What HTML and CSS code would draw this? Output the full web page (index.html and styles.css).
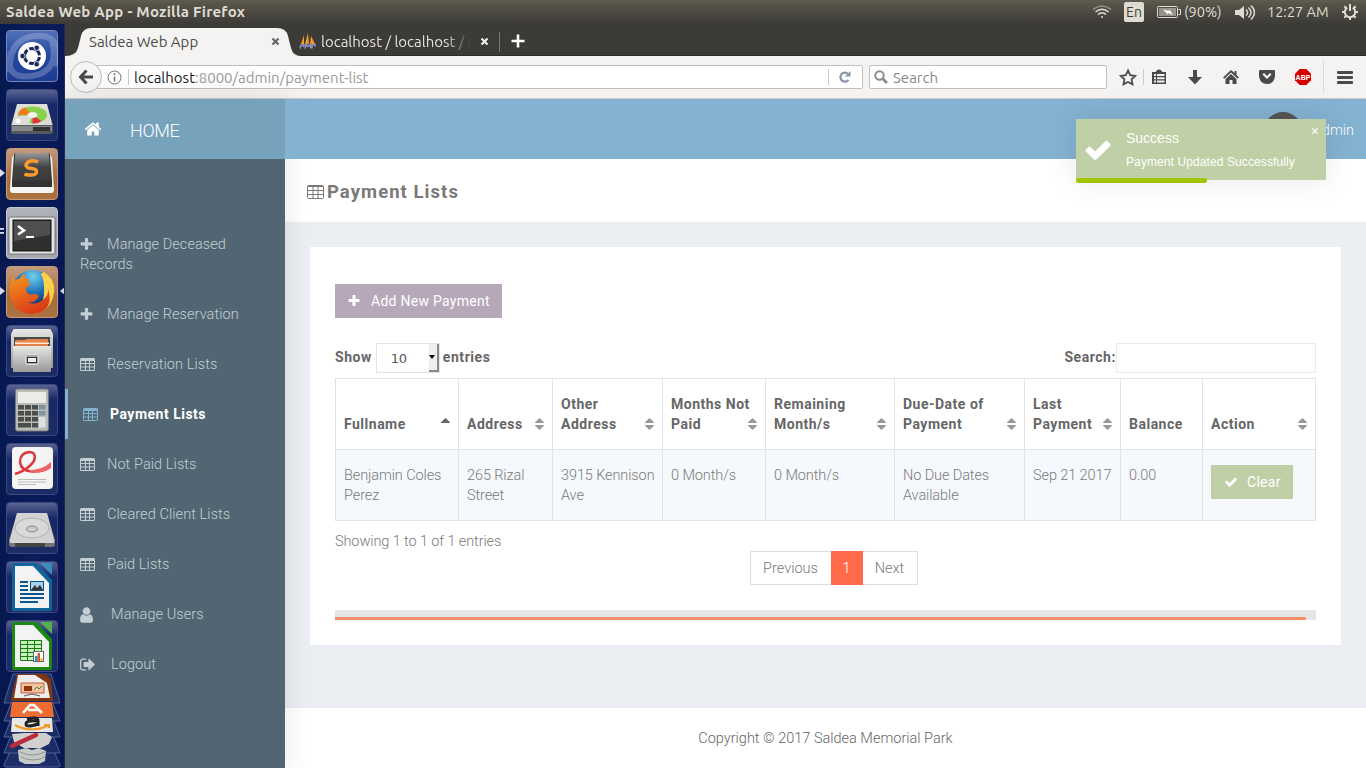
FILE: index.html
```html
<!DOCTYPE html>
<html lang="en">
<head>
<meta charset="utf-8">
<title>Saldea Web App</title>
<link rel="stylesheet" href="styles.css">
</head>
<body>
<svg class="defs" width="0" height="0">
  <defs>
    <linearGradient id="metal" x1="0" y1="0" x2="0" y2="1"><stop offset="0" stop-color="#e8e8e6"/><stop offset="1" stop-color="#9a9a98"/></linearGradient>
    <linearGradient id="dark" x1="0" y1="0" x2="0" y2="1"><stop offset="0" stop-color="#999"/><stop offset=".5" stop-color="#444"/><stop offset="1" stop-color="#3a3a3a"/></linearGradient>
    <radialGradient id="globe" cx=".5" cy=".15" r=".8"><stop offset="0" stop-color="#6fd0ee"/><stop offset=".5" stop-color="#1f6fb5"/><stop offset="1" stop-color="#0b2058"/></radialGradient>
    <linearGradient id="fox" x1="0" y1="0" x2=".4" y2="1"><stop offset="0" stop-color="#f59a20"/><stop offset="1" stop-color="#dd3d17"/></linearGradient>
    <symbol id="plus" viewBox="0 0 1792 1792"><path d="M1600 736v192q0 40-28 68t-68 28h-416v416q0 40-28 68t-68 28h-192q-40 0-68-28t-28-68v-416h-416q-40 0-68-28t-28-68v-192q0-40 28-68t68-28h416v-416q0-40 28-68t68-28h192q40 0 68 28t28 68v416h416q40 0 68 28t28 68z"/></symbol>
    <symbol id="home" viewBox="0 0 1792 1792"><path d="M1472 992v480q0 26-19 45t-45 19h-384v-384h-256v384h-384q-26 0-45-19t-19-45v-480q0-1 .5-3t.5-3l575-474 575 474q1 2 1 6zm223-69l-62 74q-8 9-21 11h-3q-13 0-21-7l-692-577-692 577q-12 8-24 7-13-2-21-11l-62-74q-8-10-7-23.5t11-21.5l719-599q32-26 76-26t76 26l244 204v-195q0-14 9-23t23-9h192q14 0 23 9t9 23v408l219 182q10 8 11 21.5t-7 23.5z"/></symbol>
    <symbol id="check" viewBox="0 0 1792 1792"><path d="M1671 566q0 40-28 68l-724 724-136 136q-28 28-68 28t-68-28l-136-136-362-362q-28-28-28-68t28-68l136-136q28-28 68-28t68 28l294 295 656-657q28-28 68-28t68 28l136 136q28 28 28 68z"/></symbol>
    <symbol id="user" viewBox="256 0 1280 1792"><path d="M1536 1399q0 109-62.5 187t-150.5 78h-854q-88 0-150.5-78t-62.5-187q0-85 8.5-160.5t31.5-152 58.5-131 94-89 134.5-34.5q131 128 313 128t313-128q76 0 134.5 34.5t94 89 58.5 131 31.5 152 8.5 160.5zm-256-887q0 159-112.5 271.5t-271.5 112.5-271.5-112.5-112.5-271.5 112.5-271.5 271.5-112.5 271.5 112.5 112.5 271.5z"/></symbol>
    <symbol id="logout" viewBox="64 0 1600 1792"><path d="M704 1440q0 4 1 20t.5 26.5-3 23.5-10 19.5-20.5 6.5h-320q-119 0-203.5-84.5t-84.5-203.5v-704q0-119 84.5-203.5t203.5-84.5h320q13 0 22.5 9.5t9.5 22.5q0 4 1 20t.5 26.5-3 23.5-10 19.5-20.5 6.5h-320q-66 0-113 47t-47 113v704q0 66 47 113t113 47h312l11.5 1 11.5 3 8 5.5 7 9 2 13.5zm928-544q0 26-19 45l-544 544q-19 19-45 19t-45-19-19-45v-288h-448q-26 0-45-19t-19-45v-384q0-26 19-45t45-19h448v-288q0-26 19-45t45-19 45 19l544 544q19 19 19 45z"/></symbol>
    <symbol id="table" viewBox="0 0 15 13"><path fill-rule="evenodd" d="M1.5 0h12A1.5 1.5 0 0 1 15 1.500v10A1.500 1.500 0 0 1 13.500 13h-12A1.500 1.500 0 0 1 0 11.500v-10A1.500 1.500 0 0 1 1.500 0zM1 3v2h4V3zm5 0v2h3V3zm4 0v2h4V3zM1 6v2.500h4V6zm5 0v2.500h3V6zm4 0v2.500h4V6zM1 9.500V12h4V9.500zm5 0V12h3V9.500zm4 0V12h4V9.500z"/></symbol>
    <symbol id="sort" viewBox="0 0 9 12"><path d="M4.500 0L9 4.300q0 .7-.6.7H.6Q0 5 0 4.300zM4.500 12L9 7.700Q9 7 8.400 7H.6Q0 7 0 7.700z"/></symbol>
  </defs>
</svg>

<header class="os-bar">
  <div class="os-title">Saldea Web App - Mozilla Firefox</div>
  <div class="os-tray">
    <svg class="wifi" width="20" height="14" viewBox="0 0 20 14" fill="none" stroke="#dfdbd2" stroke-width="1.600"><path d="M1 4.500Q10-2.500 19 4.500" opacity=".45"/><path d="M3.500 7Q10 1.500 16.500 7M6 9.500Q10 6 14 9.500"/><circle cx="10" cy="12" r="1" fill="#dfdbd2" stroke="none"/></svg>
    <span class="lang">En</span>
    <svg class="battery" width="24" height="12" viewBox="0 0 24 12"><rect x=".5" y=".5" width="20" height="11" rx="1" fill="none" stroke="#dfdbd2"/><rect x="2" y="2" width="17" height="8" fill="#95938b"/><path d="M21.500 3.500h2v5h-2" fill="none" stroke="#dfdbd2"/><path d="M6 3.500l6 1.500V3l4 6-5-2v1.500z" fill="#fff"/></svg>
    <span class="pct">(90%)</span>
    <svg class="vol" width="20" height="15" viewBox="0 0 20 15"><path d="M0 5h4l5-4v13l-5-4H0z" fill="#dfdbd2"/><path d="M11 4.500q3 3 0 6M13.500 2.500q5 5 0 10M16 .5q7 7 0 14" fill="none" stroke="#dfdbd2" stroke-width="1.500"/></svg>
    <span class="clock">12:27 AM</span>
    <svg class="gear" width="16" height="16" viewBox="0 0 16 16" fill="none" stroke="#dfdbd2"><path d="M5.300 3.600a5.200 5.200 0 1 0 5.400 0" stroke-width="2"/><path d="M8 0v7M8 13v3M0 8h3M13 8h3M2.300 13.700l2-2M13.700 13.700l-2-2M2.300 2.300l2 2M13.700 2.300l-2 2" stroke-width="2"/></svg>
  </div>
</header>

<div class="desk">
  <nav class="launcher">
    <div class="tile t-dash"><svg viewBox="0 0 52 52"><g fill="none" stroke="#fff" stroke-width="6" opacity=".22"><path d="M4 42Q2 8 30 6t18 30"/><path d="M46 10Q54 42 26 46T5 22"/></g><circle cx="26" cy="26" r="14" fill="#fff"/><circle cx="26" cy="26" r="7.500" fill="none" stroke="#17285f" stroke-width="3" stroke-dasharray="13.700 2" stroke-dashoffset="-1"/><g fill="#17285f" stroke="#fff" stroke-width=".8"><circle cx="16.500" cy="26" r="2.700"/><circle cx="30.700" cy="17.800" r="2.700"/><circle cx="30.700" cy="34.200" r="2.700"/></g></svg></div>
    <div class="tile"><svg viewBox="0 0 52 52"><path d="M11 16h30l6 20v7q0 2-2 2H7q-2 0-2-2v-7z" fill="#555a60"/><path d="M11 15h30l5.500 21H5.500z" fill="#deded9"/><ellipse cx="26.500" cy="26" rx="14.500" ry="8.500" fill="#8ad14c"/><path d="M26.500 26L12 27q1 7 11 7.500z" fill="#ddd"/><path d="M26.500 26L12 26q1-6 7-7.500z" fill="#f57b20"/><path d="M26.500 26l9 6q-4 3-9 2.500z" fill="#e2323d"/><ellipse cx="26.500" cy="26" rx="5" ry="3" fill="#f3f3f3"/><circle cx="12" cy="32" r="2.500" fill="#fff"/><path d="M6 37h40v5H6z" fill="#85898a"/><path d="M27 38h17v4H27z" fill="#333"/></svg></div>
    <div class="tile t-tan"><svg viewBox="0 0 52 52"><path d="M6 10l3-5h34l3 5 2 32q0 3-3 3H7q-3 0-3-3z" fill="#f6f6f4"/><path d="M8 7q0-2 2-2h32q2 0 2 2l2 26v6H6v-6z" fill="#333"/><path d="M9 7q0-2 2-2h30q2 0 2 2l2 26H7z" fill="url(#dark)"/><path d="M32 14q-4-2-7.500-1t-4.500 4q0 3 5.500 3.500t5 3.500-5.500 3-6.500-1" fill="none" stroke="#ff9b2c" stroke-width="3.500"/></svg></div>
    <div class="tile t-silver"><svg viewBox="0 0 52 52"><rect x="3" y="10" width="46" height="37" rx="1" fill="#e9e9e7" stroke="#777"/><rect x="7" y="13" width="38" height="31" fill="#303030" stroke="#111"/><path d="M8 14h36v14L8 34z" fill="#777" opacity=".45"/><path d="M12 19l6 4.500-6 4" fill="none" stroke="#fff" stroke-width="2.500"/><path d="M20 30h8" stroke="#fff" stroke-width="2"/></svg></div>
    <div class="tile t-tan"><svg viewBox="0 0 52 52"><circle cx="27" cy="25" r="21" fill="url(#globe)"/><path d="M38 6q12 8 10 21-2 15-16 20-4 1-4 1 9-9 10-19 1-14-3-21z" fill="#ffd34a"/><path d="M7 10l2 5q2-3 5-2 0-3 5-5-1 3 1 5h3l-1 4 3 1-5 4q0 8 8 6 2-1 5 2-4 8-12 6 8 4 16-2 6-5 5-11 6 18-9 24-15 4-25-7-7-11-3-24z" fill="url(#fox)"/></svg></div>
    <div class="tile"><svg viewBox="0 0 52 52"><path d="M7 5q0-1 2-1h34q2 0 2 1l2 4v34H5V9z" fill="url(#metal)"/><path d="M8 12h36v12H8z" fill="#4b4b4b"/><path d="M9 16l1-1 9 0 2-1h21v8H9z" fill="#e5834a"/><path d="M9 17.500h34v1.500H9z" fill="#ffe9d2"/><rect x="7" y="21" width="38" height="26" rx="1" fill="url(#metal)"/><rect x="19.500" y="29.500" width="13" height="10" rx="2" fill="#aaa" stroke="#ddd"/><rect x="21.500" y="32.500" width="9" height="5" fill="#eee" stroke="#333"/></svg></div>
    <div class="tile"><svg viewBox="0 0 52 52"><rect x="9.500" y="5" width="33" height="42" rx="2" fill="#bbbbb7" stroke="#777"/><rect x="12" y="8" width="28" height="11" fill="#ececea"/><g fill="#4c4e4c"><path d="M12 21h6v4.500h-6zM19 21h6v4.500h-6zM26 21h6v4.500h-6zM12 27h6v4.500h-6zM19 27h6v4.500h-6zM26 27h6v4.500h-6zM12 33h6v4.500h-6zM19 33h6v4.500h-6zM26 33h6v4.500h-6zM12 39h13v4.500H12zM26 39h6v4.500h-6z"/></g><path d="M33 21h6.500v4.500H33zM33 27h6.500v4.500H33z" fill="#7d979f"/><path d="M33 33h6.500v10.500H33z" fill="#dce3e6"/></svg></div>
    <div class="tile"><svg viewBox="0 0 52 52"><rect x="6" y="4" width="41" height="42" rx="4" fill="#f6f6f4"/><path d="M9 31q13-4 19-13 3-9-5-9-9 1-9 10 1 9 12 9.500 11 .5 18-5" fill="none" stroke="#d93a3f" stroke-width="2.500"/><path d="M24 27q12 0 21-8v6q-8 6-21 4z" fill="#e66"/><path d="M12 36.500h28M12 39h28M12 41.500h18" stroke="#bbb"/></svg></div>
    <div class="tile"><svg viewBox="0 0 52 52"><path d="M11 11h30l8 27v4q0 3-3 3H6q-3 0-3-3v-4z" fill="#777"/><path d="M11 11h30l7.500 28h-45z" fill="#d3d3d1"/><ellipse cx="26" cy="26" rx="17" ry="10" fill="#d9d9d7" stroke="#b2b2b0"/><ellipse cx="26" cy="27" rx="5.500" ry="3" fill="#ccc" stroke="#888"/><path d="M4 40h44" stroke="#f4f4f4" stroke-width="1.500"/><path d="M9 41h30v4H9z" fill="#444"/></svg></div>
    <div class="tile"><svg viewBox="0 0 52 52"><path d="M8 2h22l16 17v29q0 2-2 2H8q-2 0-2-2V4q0-2 2-2z" fill="#10659c"/><path d="M9 5h18l16 17v25H9z" fill="#f3f3f3"/><path d="M34 2h12v12z" fill="#3b8fc0"/><path d="M14 21h8M14 25h8M14 29h8M14 33h24M14 37h24M14 41h18" stroke="#0b568c" stroke-width="2"/><rect x="24.500" y="20.500" width="13" height="9" fill="#a6d0ee" stroke="#075185"/><path d="M25 29l4-5 2 3 3-3 3 5z" fill="#333"/></svg></div>
    <div class="tile"><svg viewBox="0 0 52 52"><path d="M8 2h22l16 17v29q0 2-2 2H8q-2 0-2-2V4q0-2 2-2z" fill="#1b8912"/><path d="M9 5h18l16 17v25H9z" fill="#f3f3f3"/><path d="M34 2h12v12z" fill="#56b44b"/><path d="M14.500 20.500h21v20h-21z" fill="#c8f0bd"/><path d="M14.500 20.500h21v20h-21zM21.500 20v21M28.500 20v21M14 24.500h22M14 28.500h22M14 32.500h22M14 36.500h22" fill="none" stroke="#157b0c"/><rect x="27.500" y="31.500" width="10" height="10" fill="#fff" stroke="#666"/><path d="M29 36h2.500v5H29z" fill="#1e8fd0"/><path d="M31.500 33h2.500v8h-2.500z" fill="#e0562b"/><path d="M34.500 38h2v3h-2z" fill="#efb71c"/></svg></div>
    <svg class="stack" viewBox="0 0 65 95" width="65" height="95">
      <g fill="#1d2e68" stroke="#53618f"><path d="M12 74h40l8 18q0 2-2 2H6q-2 0-2-2z"/><path d="M12 60h40l8 20H4z"/><path d="M12 44h40l8 20H4z"/><path d="M12 28h40l8 20H4z"/><path d="M13 1h38l9 29H4z"/></g>
      <path d="M17 1h28l6 5 2 21q0 1-2 1H13q-2 0-2-2z" fill="#803713"/><path d="M18 2h17l12 8 3 15H14z" fill="#eee"/><path d="M21 10h23v10H21z" fill="#f1c2a4" stroke="#c85f2a"/><path d="M24 13h8v5h-8z" fill="#8e3512"/><path d="M34 17l3-3 2 2 3-3" stroke="#3a8f2a" fill="none"/><path d="M24 23l8-2 8 2" fill="none" stroke="#555"/>
      <path d="M12 29h40l2 15H10z" fill="#ef6d32"/><path d="M23 40l7-8h4l8 8M28 37h10" fill="none" stroke="#fff" stroke-width="2.600"/>
      <path d="M12 45h40l1 14H11z" fill="#e8e8e6"/><path d="M27 46q11-3 11 2v5M38 48q-12-1-12 3t12 0" fill="none" stroke="#222" stroke-width="3"/><path d="M15 52q17 9 34 0M44 52h5v3" fill="none" stroke="#f79a20" stroke-width="2"/>
      <path d="M12 61l12-1h22l6 4-3 7-8 4H24l-10-6z" fill="#d0d0ce"/><path d="M12 73l24-11" stroke="#b92c3a" stroke-width="4.500" stroke-linecap="round"/>
      <path d="M18 77l8-2 6 2 7-2 7 3-1 10-6 3H25l-6-3z" fill="#c5cbc6"/><path d="M20 79q12 6 25 0M21 84q12 6 24 0" fill="none" stroke="#8f9690"/>
    </svg>
    <svg class="marks" width="65" height="160" viewBox="0 0 65 160"><path d="M0 4l5 4-5 4zM0 63h4v1.700H0zM0 67h4v1.700H0zM0 122l5 4-5 4zM65 122l-5 4 5 4z" fill="#dde"/></svg>
  </nav>

  <main class="browser">
    <div class="tabs">
      <svg class="tab-shape" width="236" height="29" viewBox="0 0 236 29"><path d="M0 29V28Q11 28 13 20L16 8Q18 0 26 0H212Q221 0 223 8L226 20Q228 28 236 28V29Z" fill="#f4f3f2"/></svg>
      <div class="tab tab-active"><span class="tab-text">Saldea Web App</span><svg width="9" height="9" viewBox="0 0 9 9"><path d="M1.500 1.500l6 6M7.500 1.500l-6 6" stroke="#666" stroke-width="2.200"/></svg></div>
      <div class="tab tab-second"><svg width="17" height="17" viewBox="0 0 17 17"><path d="M2 11l3-9v9zM6 11L9 0l1 11zM11 11l1-8 4 8z" fill="#f59b29"/><path d="M1 15.500l1-3.500h3l-1 2M6 15.500l1-4 2 2 2-2 1 4M13 15.500v-4h3v2" fill="none" stroke="#9297c8" stroke-width="1.500"/></svg><span class="tab-text fade">localhost / localhost / s</span><svg width="9" height="9" viewBox="0 0 9 9"><path d="M1.500 1.500l6 6M7.500 1.500l-6 6" stroke="#eee" stroke-width="2.200"/></svg></div>
      <svg class="new-tab" width="14" height="14" viewBox="0 0 14 14"><path d="M7 .5v13M.5 7h13" stroke="#fff" stroke-width="2.600"/></svg>
    </div>
    <div class="toolbar">
      <div class="back"><svg width="16" height="16" viewBox="0 0 16 16"><path d="M8.500 1.500L2.500 8l6 6.500M3 8h12" fill="none" stroke="#4a4a4a" stroke-width="3"/></svg></div>
      <div class="url">
        <svg width="15" height="15" viewBox="0 0 15 15"><circle cx="7.500" cy="7.500" r="6.500" fill="none" stroke="#777"/><path d="M7.500 6.500v5" stroke="#777" stroke-width="1.500"/><circle cx="7.500" cy="4.200" r="1" fill="#777"/></svg>
        <i class="rule"></i><span class="addr"><b>localhost</b>:8000/admin/payment-list</span>
        <i class="rule"></i><svg class="reload" width="12" height="12" viewBox="0 0 12 12"><path d="M9.500 8.800A4.500 4.500 0 1 1 9 2.800" fill="none" stroke="#8793a1" stroke-width="2.200"/><path d="M11.500 0v5.500H6z" fill="#8793a1"/></svg>
      </div>
      <div class="find"><svg width="14" height="14" viewBox="0 0 14 14"><circle cx="5.500" cy="5.500" r="4.200" fill="none" stroke="#8b8b8b" stroke-width="2"/><path d="M8.500 8.500l4.500 4.500" stroke="#8b8b8b" stroke-width="2.600"/></svg><span>Search</span></div>
      <svg class="tools" width="259" height="42" viewBox="0 0 259 42" fill="#4a4a4a">
        <path d="M21 14.500l2.200 4.600 5 .7-3.600 3.500.9 5L21 25.900l-4.500 2.400.9-5-3.600-3.500 5-.7z" fill="none" stroke="#4a4a4a" stroke-width="1.800"/>
        <path d="M36 13h1v16h-1z" fill="#ccc"/>
        <path fill-rule="evenodd" d="M45 16h4q0-2 3-2.500 3 .5 3 2.500h4v12H45zM47 18v2h2v-2zm3 0v2h7.500v-2zm-3 3.300v2h2v-2zm3 0v2h7.500v-2zm-3 3.300v2h2v-2zm3 0v2h7.500v-2z"/>
        <path d="M86 14h4v7h5l-7 7.500-7-7.500h5z"/>
        <path d="M124 14l3.500 3.100V15h2v3.900l2.500 2.600-1.300 1.200L124 16.500l-6.700 6.200-1.300-1.200zM118.500 23l5.500-5 5.500 5v5h-4v-4h-3v4h-4z"/>
        <path fill-rule="evenodd" d="M152 15q0-1 1-1h14q1 0 1 1v5q-1 8-8 8t-8-8zM155.500 18.500L160 23l4.500-4.500-1.500-1.500-3 3-3-3z"/>
        <path d="M192.700 13h6.600l4.700 4.700v6.600l-4.700 4.700h-6.600l-4.700-4.700v-6.600z" fill="#d40000"/>
        <text class="abp" x="196" y="24" fill="#fff" text-anchor="middle">ABP</text>
        <path d="M216 4h1v34h-1z" fill="#dedcda"/>
        <rect x="230" y="15" width="16" height="3" rx="1"/><rect x="230" y="20" width="16" height="3" rx="1"/><rect x="230" y="25" width="16" height="3" rx="1"/>
      </svg>
    </div>

    <div class="page">
      <aside class="side">
        <a class="brand"><svg class="fa"><use href="#home"/></svg><span>HOME</span></a>
        <ul class="menu">
          <li><svg class="fa"><use href="#plus"/></svg>Manage Deceased Records</li>
          <li><svg class="fa"><use href="#plus"/></svg>Manage Reservation</li>
          <li><svg class="grid"><use href="#table"/></svg>Reservation Lists</li>
          <li class="active"><svg class="grid"><use href="#table"/></svg>Payment Lists</li>
          <li><svg class="grid"><use href="#table"/></svg>Not Paid Lists</li>
          <li><svg class="grid"><use href="#table"/></svg>Cleared Client Lists</li>
          <li><svg class="grid"><use href="#table"/></svg>Paid Lists</li>
          <li><svg class="person"><use href="#user"/></svg>Manage Users</li>
          <li><svg class="exit"><use href="#logout"/></svg>Logout</li>
        </ul>
      </aside>
      <section class="main">
        <div class="top"><span class="avatar"></span><span class="who">Admin</span></div>
        <h1 class="heading"><svg viewBox="0 0 17 14" fill="none" stroke="#797979"><rect x=".5" y=".5" width="16" height="13" rx="1"/><path d="M1 1.500h15M1 5.500h15M1 9.500h15M6 1v12M11 1v12"/></svg>Payment Lists</h1>
        <div class="content">
          <div class="panel">
            <a class="btn btn-add"><svg><use href="#plus"/></svg>Add New Payment</a>
            <div class="controls">
              <div class="length"><span>Show</span><div class="select"><span>10</span><i></i></div><span>entries</span></div>
              <div class="filter"><span>Search:</span><input type="text" class="box"></div>
            </div>
            <table class="list">
              <colgroup><col class="c1"><col class="c2"><col class="c3"><col class="c4"><col class="c5"><col class="c6"><col class="c7"><col class="c8"><col class="c9"></colgroup>
              <thead><tr>
                <th><div>Fullname<svg class="asc" viewBox="0 0 9 5"><path d="M4.500 0L9 4.300q0 .7-.6.7H.6Q0 5 0 4.300z"/></svg></div></th>
                <th><div>Address<svg><use href="#sort"/></svg></div></th>
                <th><div>Other<br>Address<svg><use href="#sort"/></svg></div></th>
                <th><div>Months Not<br>Paid<svg><use href="#sort"/></svg></div></th>
                <th><div>Remaining<br>Month/s<svg><use href="#sort"/></svg></div></th>
                <th><div>Due-Date of<br>Payment<svg><use href="#sort"/></svg></div></th>
                <th><div>Last<br>Payment<svg><use href="#sort"/></svg></div></th>
                <th><div>Balance</div></th>
                <th><div>Action<svg><use href="#sort"/></svg></div></th>
              </tr></thead>
              <tbody><tr>
                <td>Benjamin Coles<br>Perez</td><td>265 Rizal<br>Street</td><td>3915 Kennison<br>Ave</td><td>0 Month/s</td><td>0 Month/s</td><td>No Due Dates<br>Available</td><td>Sep 21 2017</td><td>0.00</td>
                <td class="act"><a class="btn btn-clear"><svg><use href="#check"/></svg>Clear</a></td>
              </tr></tbody>
            </table>
            <div class="info">Showing 1 to 1 of 1 entries</div>
            <div class="pager"><span class="prev">Previous</span><span class="cur">1</span><span class="next">Next</span></div>
            <div class="scroll"><i></i></div>
          </div>
        </div>
        <footer class="foot">Copyright © 2017 Saldea Memorial Park</footer>
      </section>
      <div class="toast">
        <svg class="toast-check"><use href="#check"/></svg>
        <div class="toast-text"><div class="toast-title">Success</div><div class="toast-msg">Payment Updated Successfully</div></div>
        <span class="toast-close">×</span>
        <i class="toast-progress"></i>
      </div>
    </div>
  </main>
</div>
</body>
</html>
```
FILE: styles.css
```css
* { box-sizing: border-box; }
body { margin: 0; width: 1366px; height: 768px; overflow: hidden; display: flex; flex-direction: column; font-family: Roboto, "Liberation Sans", sans-serif; }
.defs { position: absolute; }
svg { display: block; flex: none; }

/* Desktop bar */
.os-bar { height: 24px; flex: none; display: flex; justify-content: space-between; align-items: center; padding: 0 8px 0 6px; background: linear-gradient(#5f5d53, #575449 15%, #3c3b37); color: #dfdbd2; font-family: Ubuntu, "Noto Sans", sans-serif; }
.os-title { font-size: 15px; font-weight: 700; line-height: 24px; letter-spacing: .25px; }
.os-tray { display: flex; align-items: center; height: 24px; font-size: 14.5px; line-height: 24px; }
.lang { width: 20px; height: 20px; margin-left: 12px; background: #dfdbd2; color: #3c3b37; border-radius: 2px; text-align: center; line-height: 20px; font-size: 14px; }
.battery { margin-left: 13px; }
.pct { margin-left: 3px; width: 40px; }
.vol { margin-left: 11px; }
.clock { margin-left: 12px; width: 62px; white-space: nowrap; }
.gear { margin-left: 13px; }

.desk { flex: 1; display: flex; min-height: 0; }

/* Launcher */
.launcher { position: relative; width: 65px; flex: none; display: flex; flex-direction: column; align-items: flex-start; gap: 7px; padding-top: 6px; background: linear-gradient(90deg, #06184f, #0b1c5b 50%, #0a1959); border-right: 1px solid #2d2858; overflow: hidden; }
.tile { width: 52px; height: 52px; flex: none; margin-left: 6px; border: 1px solid #3c4980; border-radius: 4px; background: linear-gradient(#5a6492, #18296a 30%, #1d2d66); }
.tile svg { margin: -1px; width: 52px; height: 52px; }
.t-dash { background: linear-gradient(#5370b8, #2448a0 50%, #1d3c91); border-color: #7289c2; }
.t-tan { background: linear-gradient(#c49a7d, #a9703f 60%, #ad7443); border-color: #c99c78; }
.t-silver { background: linear-gradient(#b4b6bd, #9b9eaa 60%, #a6a9b2); border-color: #c4c6cc; }
.stack { margin-top: -6px; }
.marks { position: absolute; left: 0; top: 141px; }

/* Browser chrome */
.browser { flex: 1; display: flex; flex-direction: column; min-width: 0; font-size: 15px; }
.tabs { position: relative; height: 32px; flex: none; display: flex; align-items: center; background: #3c3b37; border-bottom: 1px solid #2c2b28; font-family: Ubuntu, "Noto Sans", sans-serif; font-size: 15px; line-height: 20px; color: #e4e2dc; }
.tab-shape { position: absolute; left: 0; top: 4px; }
.tab { position: relative; display: flex; align-items: center; }
.tab-active { width: 215px; padding-left: 24px; color: #4b4b4b; justify-content: space-between; margin-top: 4px; }
.tab-second { width: 220px; padding: 0 10px 0 19px; margin-top: 4px; border-right: 1px solid #777; }
.tab-text { white-space: nowrap; }
.fade { width: 152px; margin: 0 8px 0 5px; overflow: hidden; -webkit-mask-image: linear-gradient(90deg, #000 82%, transparent); mask-image: linear-gradient(90deg, #000 82%, transparent); }
.new-tab { margin: 3px 0 0 11px; }
.toolbar { height: 43px; flex: none; display: flex; align-items: center; background: #f4f3f2; border-bottom: 1px solid #ccc9c6; padding-left: 5px; font-family: Ubuntu, "Noto Sans", sans-serif; font-size: 15px; }
.back { position: relative; width: 32px; height: 32px; flex: none; border: 1px solid #bbb; border-radius: 50%; background: #f6f5f4; display: flex; align-items: center; justify-content: center; z-index: 1; }
.url { height: 24px; width: 767px; flex: none; margin-left: -6px; padding: 0 11px 0 10px; border: 1px solid #c2bfbc; border-radius: 2px; background: #fff; display: flex; align-items: center; color: #999; }
.rule { width: 1px; height: 16px; background: #c8c8c8; margin-left: 6px; }
.addr { flex: 1; margin-left: 5px; white-space: nowrap; }
.addr b { font-weight: 400; color: #222; }
.reload { margin-left: 10px; }
.find { height: 24px; width: 238px; margin-left: 6px; flex: none; border: 1px solid #c2bfbc; border-radius: 2px; background: #fff; display: flex; align-items: center; padding-left: 4px; color: #888; gap: 5px; }
.abp { font: 700 7px "Liberation Sans", sans-serif; }

/* Application */
.page { position: relative; flex: 1; display: flex; min-height: 0; color: #797979; font-size: 14.5px; line-height: 20px; font-weight: 300; }
.side { position: relative; width: 220px; flex: none; background: #516672; box-shadow: 0 0 28px rgba(0,0,0,.1); z-index: 1; color: #c3ced4; }
.brand { height: 60px; display: flex; align-items: center; padding-left: 19px; background: #76a2bb; color: #fff; font-size: 18px; }
.brand svg { width: 18px; height: 18px; fill: #fff; }
.brand span { margin: 3px 0 0 28px; letter-spacing: -.3px; }
.menu { list-style: none; margin: 0; padding: 60px 0 0; letter-spacing: .08px; }
.menu li { padding: 16px 20px 14px 15px; }
.menu svg { display: inline-block; fill: #c3ced4; height: 15px; width: 15px; vertical-align: -3px; margin: 0 13px 0 -1px; }
.menu .grid { height: 13px; vertical-align: -2px; margin: 0 12px 0 0; }
.menu .person { width: 13px; height: 18px; vertical-align: -5px; margin: 0 18px 0 0; }
.menu .exit { width: 15px; height: 17px; vertical-align: -4px; margin: 0 16px 0 0; }
.menu .active { border-left: 3px solid #84b2d1; color: #fff; font-weight: 700; font-size: 14px; letter-spacing: .5px; padding: 15px; }
.menu .active svg { fill: #84b2d1; }
.main { flex: 1; display: flex; flex-direction: column; min-width: 0; background: #ebeff4; }
.top { position: relative; z-index: 1; height: 60px; flex: none; background: #84b2d1; color: #fff; display: flex; align-items: center; justify-content: flex-end; gap: 11px; padding: 4px 12px 0 0; }
.avatar { width: 38px; height: 38px; border-radius: 50%; background: #555; }
.who { letter-spacing: 0; }
.heading { height: 63px; flex: none; margin: 0; display: flex; align-items: center; gap: 3px; padding: 2px 0 0 22px; background: #fff; color: #797979; font-size: 18.5px; font-weight: 700; letter-spacing: 1.05px; }
.heading svg { width: 17px; height: 14px; }
.content { flex: 1; padding: 25px; }
.panel { height: 398px; background: #fff; padding: 37px 25px 0; display: flex; flex-direction: column; }
.btn { display: flex; align-items: center; height: 34px; color: #fff; padding-left: 12px; font-weight: 400; white-space: nowrap; font-size: 14px; letter-spacing: .27px; }
.btn svg { fill: #fff; width: 14px; height: 14px; margin-right: 10px; }
.btn-add { width: 167px; background: #b6a8b9; flex: none; }
.btn-clear { width: 82px; background: #bfcfa6; padding-left: 13px; }
.btn-clear svg { margin-right: 9px; }
.controls { display: flex; justify-content: space-between; margin-top: 25px; height: 30px; flex: none; font-weight: 700; color: #666; font-size: 14px; letter-spacing: .55px; }
.controls > div > span { margin-bottom: 2px; }
.length, .filter { display: flex; align-items: center; }
.select { width: 64px; height: 30px; margin: 0 3px 0 4px; border: 1px solid #e2e4e7; display: flex; align-items: center; justify-content: space-between; padding-left: 14px; font: 13px "DejaVu Sans", sans-serif; letter-spacing: -.4px; color: #555; }
.select i { width: 10px; height: 28px; background: #eee; border-right: 2px solid #888; border-bottom: 2px solid #888; display: flex; align-items: center; }
.select i::before { content: ""; border: 3.5px solid transparent; border-top: 4px solid #000; border-bottom: 0; }
.box { width: 200px; height: 30px; border: 1px solid #e8eaed; background: #fff; padding: 0; }
.list { width: 981px; table-layout: fixed; border-collapse: collapse; margin-top: 5px; flex: none; }
.c1 { width: 123px; } .c2 { width: 94px; } .c3 { width: 110px; } .c4 { width: 103px; } .c5 { width: 129px; } .c6 { width: 130px; } .c7 { width: 96px; } .c8 { width: 82px; } .c9 { width: 113px; }
.list th, .list td { height: 71px; border: 1px solid #e0e4e9; padding: 15px 8px; text-align: left; vertical-align: top; white-space: nowrap; }
.list th { vertical-align: bottom; font-weight: 700; font-size: 14px; letter-spacing: .5px; color: #666; }
.list th div { position: relative; }
.list th svg { position: absolute; right: 0; bottom: 4px; width: 9px; height: 12px; fill: #999; }
.list th .asc { height: 5px; bottom: 11px; fill: #666; }
.list td { padding: 16px 8px 0; background: #f5f9fd; letter-spacing: -.1px; }
.list .act { padding-top: 15px; }
.info { margin-top: 11px; height: 19px; letter-spacing: -.1px; }
.pager { display: flex; align-self: center; height: 34px; flex: none; margin-right: -16px; }
.pager span { border: 1px solid #ddd; display: flex; align-items: center; justify-content: center; padding-top: 1px; }
.pager .prev { width: 81px; border-right: 0; }
.pager .next { width: 55px; border-left: 0; }
.pager .cur { width: 32px; background: #ff6b4a; border-color: #ff6b4a; color: #fff; }
.scroll { height: 10px; flex: none; margin-top: 25px; background: #e5e5e5; padding-top: 7px; }
.scroll i { display: block; width: 971px; height: 3px; background: #ef8e67; border-radius: 0 2px 2px 0; }
.foot { height: 60px; flex: none; background: #fff; text-align: center; line-height: 60px; padding-top: 1px; color: #666; }

/* Notification */
.toast { position: absolute; z-index: 2; left: 1011px; top: 20px; width: 250px; height: 61px; background: #bfcfa6; color: #fff; display: flex; font: 400 12px/18px "Liberation Sans", sans-serif; box-shadow: 0 0 30px rgba(0,0,0,.1); }
.toast-check { width: 28px; height: 28px; fill: #fff; stroke: #fff; stroke-width: 60px; margin: 17px 0 0 8px; }
.toast-text { margin: 10px 0 0 14px; }
.toast-title { font-size: 14px; }
.toast-msg { margin-top: 6px; white-space: nowrap; letter-spacing: .1px; }
.toast-close { position: absolute; right: 7px; top: 3px; font-size: 14px; }
.toast-progress { position: absolute; left: 0; bottom: -3px; width: 131px; height: 5px; border-radius: 3px; background: #9fc600; }
```
